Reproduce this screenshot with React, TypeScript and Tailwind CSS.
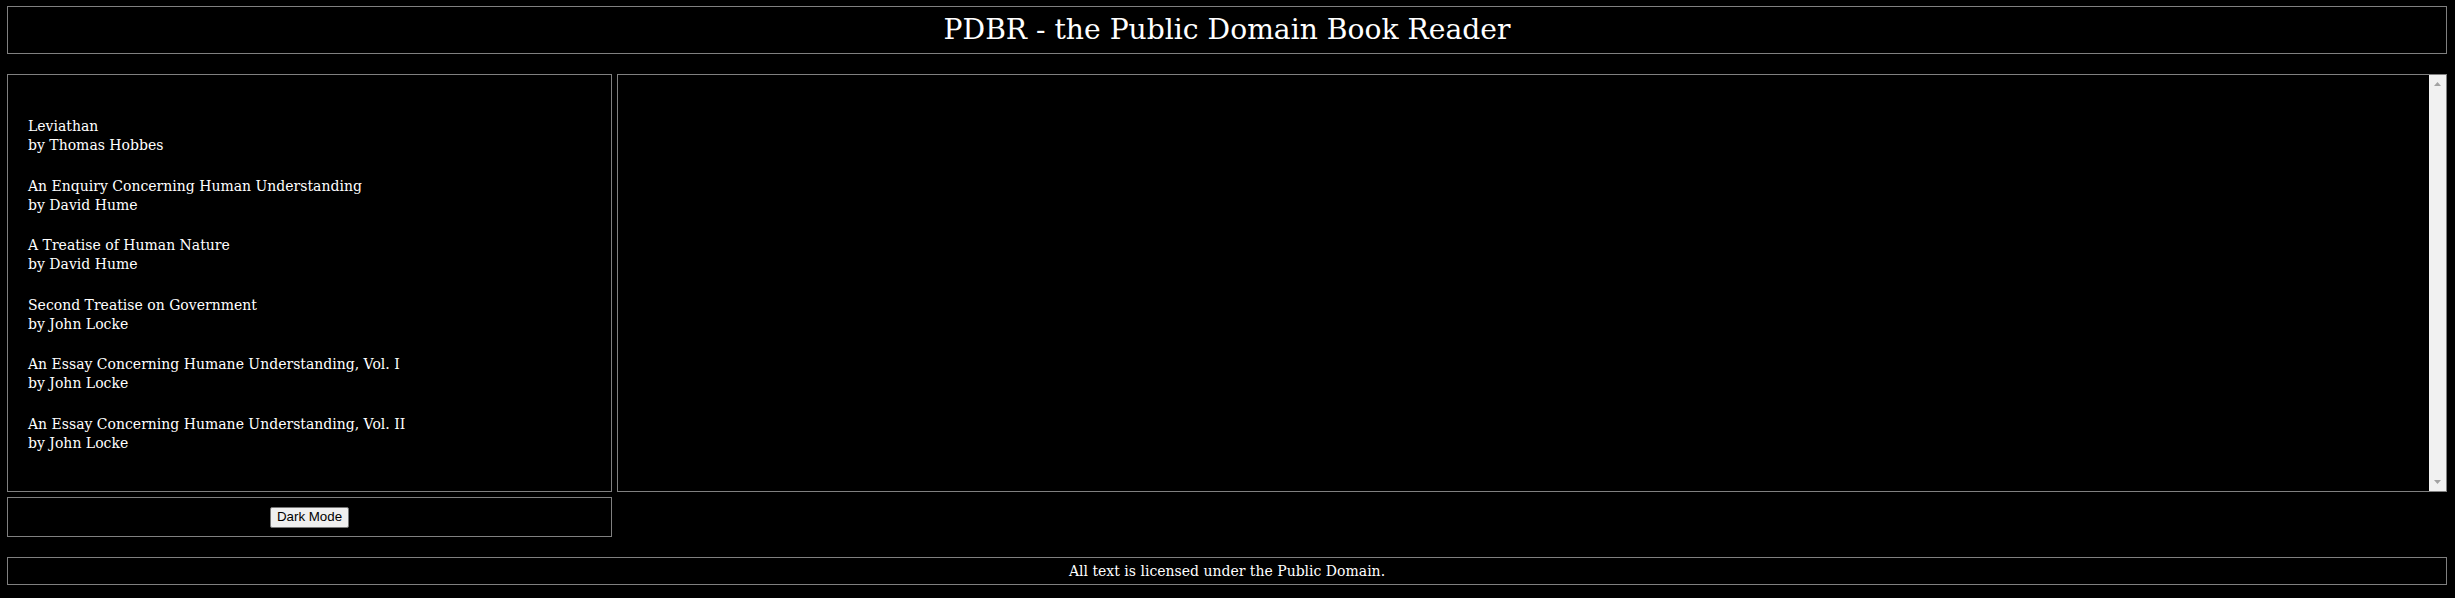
import React from "react";

const books = [
  { title: "Leviathan", author: "by Thomas Hobbes" },
  { title: "An Enquiry Concerning Human Understanding", author: "by David Hume" },
  { title: "A Treatise of Human Nature", author: "by David Hume" },
  { title: "Second Treatise on Government", author: "by John Locke" },
  { title: "An Essay Concerning Humane Understanding, Vol. I", author: "by John Locke" },
  { title: "An Essay Concerning Humane Understanding, Vol. II", author: "by John Locke" },
];

export default function App() {
  return (
    <div
      className="min-h-screen bg-black text-white pt-[6px] pl-[7px] pr-[8px]"
      style={{ fontFamily: '"DejaVu Serif", "Liberation Serif", serif' }}
    >
      <header className="h-[48px] border border-[#808080] flex items-center justify-center">
        <h1 className="text-[28.2px] leading-none font-normal">PDBR - the Public Domain Book Reader</h1>
      </header>

      <div className="mt-[20px] grid grid-cols-[605px_1fr] gap-x-[5px] gap-y-[5px]">
        <div className="h-[418px] border border-[#808080] pl-[20px] pt-[42px] text-[14px] leading-[19px]">
          {books.map((b) => (
            <div key={b.title} className="mb-[21.5px]">
              <div>{b.title}</div>
              <div>{b.author}</div>
            </div>
          ))}
        </div>

        <div className="h-[418px] border border-[#808080] flex justify-end">
          <div className="w-[17px] h-full bg-[#f1f1f1] flex flex-col justify-between">
            <svg width="17" height="17" viewBox="0 0 17 17">
              <polygon points="5,11 12,11 8.5,7" fill="#a3a3a3" />
            </svg>
            <svg width="17" height="17" viewBox="0 0 17 17">
              <polygon points="5,6 12,6 8.5,10" fill="#a3a3a3" />
            </svg>
          </div>
        </div>

        <div className="h-[40px] border border-[#808080] flex items-center justify-center">
          <button
            className="h-[21px] px-[6px] bg-[#efefef] border border-[#767676] rounded-[2px] text-black text-[13.33px] leading-none"
            style={{ fontFamily: '"Liberation Sans", Arial, sans-serif' }}
          >
            Dark Mode
          </button>
        </div>
      </div>

      <footer className="mt-[20px] h-[28px] border border-[#808080] flex items-center justify-center text-[14px]">
        All text is licensed under the Public Domain.
      </footer>
    </div>
  );
}
